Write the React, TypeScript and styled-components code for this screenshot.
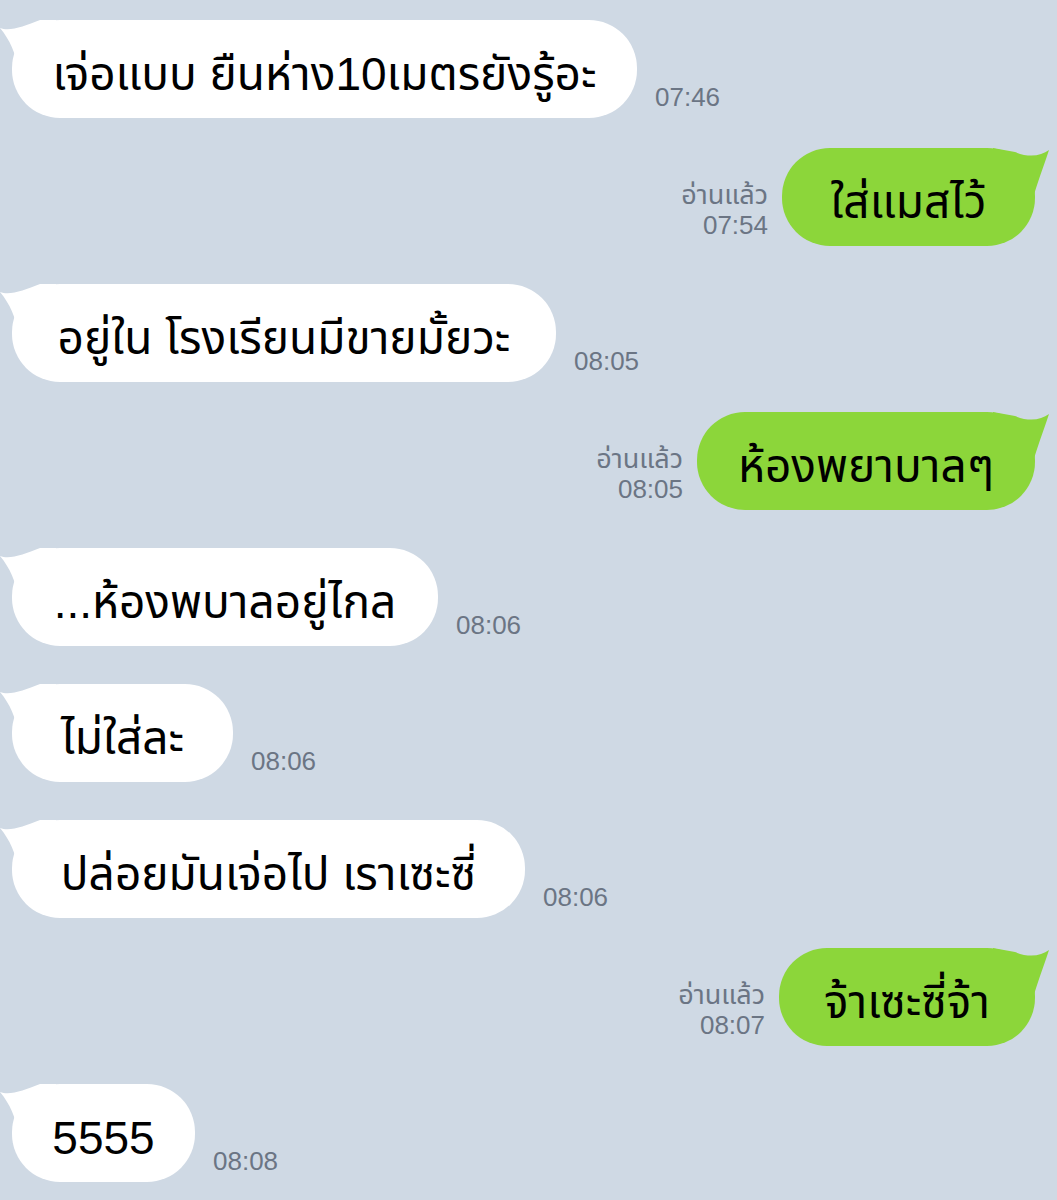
import React from 'react';
import { styled, createGlobalStyle } from 'styled-components';

type Side = 'in' | 'out';

interface Message {
	side: Side;
	text: string;
	time: string;
	width: number;
	gap: number;
}

const messages: Message[] = [
	{ side: 'in', text: 'เจ่อแบบ ยืนห่าง10เมตรยังรู้อะ', time: '07:46', width: 625, gap: 20 },
	{ side: 'out', text: 'ใส่แมสไว้', time: '07:54', width: 253, gap: 30 },
	{ side: 'in', text: 'อยู่ใน โรงเรียนมีขายมั้ยวะ', time: '08:05', width: 544, gap: 38 },
	{ side: 'out', text: 'ห้องพยาบาลๆ', time: '08:05', width: 338, gap: 30 },
	{ side: 'in', text: '...ห้องพบาลอยู่ไกล', time: '08:06', width: 426, gap: 38 },
	{ side: 'in', text: 'ไม่ใส่ละ', time: '08:06', width: 221, gap: 38 },
	{ side: 'in', text: 'ปล่อยมันเจ่อไป เราเซะซี่', time: '08:06', width: 513, gap: 38 },
	{ side: 'out', text: 'จ้าเซะซี่จ้า', time: '08:07', width: 256, gap: 30 },
	{ side: 'in', text: '5555', time: '08:08', width: 183, gap: 38 },
];

function Tail({ side }: { side: Side }) {
	const fill = side === 'in' ? '#ffffff' : '#8cd63a';
	return (
		<TailSvg side={side} width='56' height='50' viewBox='0 0 56 50'>
			{side === 'in' ? (
				<path d='M0 8 C 10 12, 24 6, 40 0 L 56 0 L 56 50 L 18 50 C 16 34, 10 20, 0 8 Z' fill={fill} />
			) : (
				<path d='M56 2 C 48 8, 36 10, 22 4 L 0 0 L 0 50 L 40 50 C 44 36, 50 20, 56 2 Z' fill={fill} />
			)}
		</TailSvg>
	);
}

function App() {
	return (
		<>
			<GlobalStyle />
			<Chat>
				{messages.map((m, i) => (
					<Row key={i} side={m.side} gap={m.gap}>
						{m.side === 'out' && (
							<Meta side='out'>
								<ReadLabel>อ่านแล้ว</ReadLabel>
								<span>{m.time}</span>
							</Meta>
						)}
						<Bubble side={m.side} style={{ width: m.width }}>
							<Tail side={m.side} />
							<BubbleText>{m.text}</BubbleText>
						</Bubble>
						{m.side === 'in' && (
							<Meta side='in'>
								<span>{m.time}</span>
							</Meta>
						)}
					</Row>
				))}
			</Chat>
		</>
	);
}

export default App;

const GlobalStyle = createGlobalStyle`
	html, body {
		margin: 0;
		padding: 0;
		background: #cfd9e4;
	}
	body {
		font-family: 'Liberation Sans', 'Noto Sans Thai', 'Noto Sans', 'DejaVu Sans', sans-serif;
	}
`;

const Chat = styled.div`
	display: flex;
	flex-direction: column;
	width: 1057px;
	min-height: 1200px;
	padding: 0 22px 0 12px;
	box-sizing: border-box;
	background: #cfd9e4;
`;

const Row = styled.div<{ side: Side; gap: number }>`
	display: flex;
	align-items: flex-end;
	justify-content: ${(p) => (p.side === 'in' ? 'flex-start' : 'flex-end')};
	margin-top: ${(p) => p.gap}px;
`;

const Bubble = styled.div<{ side: Side }>`
	position: relative;
	box-sizing: border-box;
	height: 98px;
	padding-top: 10px;
	border-radius: 48px;
	background: ${(p) => (p.side === 'in' ? '#ffffff' : '#8cd63a')};
	display: flex;
	align-items: center;
	justify-content: center;
	white-space: nowrap;
	flex-shrink: 0;
`;

const TailSvg = styled.svg<{ side: Side }>`
	position: absolute;
	top: 0;
	${(p) => (p.side === 'in' ? 'left: -12px;' : 'right: -14px;')}
`;

const BubbleText = styled.span`
	position: relative;
	font-size: 46px;
	line-height: 1;
	color: #000;
`;

const Meta = styled.div<{ side: Side }>`
	display: flex;
	flex-direction: column;
	align-items: flex-end;
	font-size: 26px;
	line-height: 30px;
	color: #6b7584;
	${(p) => (p.side === 'in' ? 'margin-left: 18px; margin-bottom: 6px;' : 'margin-right: 14px; margin-bottom: 6px;')}
`;

const ReadLabel = styled.span`
	font-size: 27px;
`;
